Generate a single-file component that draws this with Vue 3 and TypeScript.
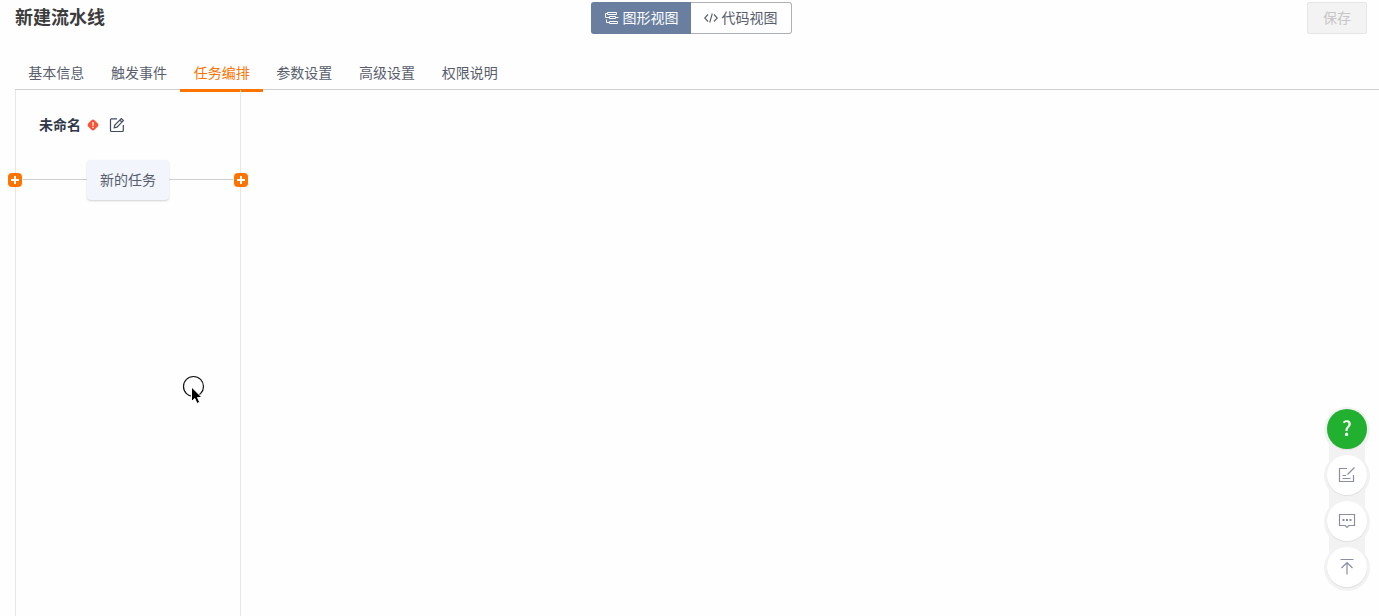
<script setup lang="ts">
import { ref } from 'vue'

const tabs: string[] = ['基本信息', '触发事件', '任务编排', '参数设置', '高级设置', '权限说明']
const activeTab = ref('任务编排')
const view = ref<'graph' | 'code'>('graph')
</script>

<template>
  <div class="page">
    <header class="header">
      <h1 class="title">新建流水线</h1>
      <div class="switch">
        <button type="button" class="switch-item" :class="{ on: view === 'graph' }" @click="view = 'graph'">
          <svg width="14" height="14" viewBox="0 0 14 14" fill="none" stroke="currentColor">
            <path d="M2.500 1.500H11.500V3.500H2.500Z" />
            <path d="M2.500 2.500H.500V6.500H4.500M4.500 5.500H10.500V7.500H4.500ZM10.500 6.500H13.500" />
            <path d="M4.500 10.500H12.500V12.500H4.500ZM4.500 11.500H1.500V8.500" />
          </svg>
          <span>图形视图</span>
        </button>
        <button type="button" class="switch-item" :class="{ on: view === 'code' }" @click="view = 'code'">
          <svg width="14" height="14" viewBox="0 0 14 14" fill="none" stroke="currentColor" stroke-width="1.100">
            <path d="M4 3.500.700 7 4 10.500M10 3.500 13.300 7 10 10.500M8.300 2.500 5.700 11.500" />
          </svg>
          <span>代码视图</span>
        </button>
      </div>
      <button type="button" class="save" disabled>保存</button>
    </header>

    <nav class="tabs">
      <div class="tab-list">
        <button
          v-for="tab in tabs"
          :key="tab"
          type="button"
          class="tab"
          :class="{ active: tab === activeTab }"
          @click="activeTab = tab"
        >{{ tab }}</button>
      </div>
    </nav>

    <main class="canvas">
      <section class="stage">
        <div class="stage-head">
          <h2 class="stage-name">未命名</h2>
          <svg class="warn" width="12" height="12" viewBox="0 0 12 12">
            <path d="M4.500 1.200Q6 0 7.500 1.200L10.800 4.500Q12 6 10.800 7.500L7.500 10.800Q6 12 4.500 10.800L1.200 7.500Q0 6 1.200 4.500Z" fill="#fa5234" />
            <path d="M6 3v3.700M6 7.800v1.300" stroke="#fff" stroke-width="1.300" />
          </svg>
          <button type="button" class="edit" aria-label="编辑">
            <svg width="16" height="16" viewBox="0 0 16 16" fill="none" stroke="#414b5e" stroke-width="1.200">
              <path d="M8 1.800H2.500Q1.500 1.800 1.500 2.800V13.500Q1.500 14.500 2.500 14.500H13.300Q14.300 14.500 14.300 13.500V8" />
              <path d="M5.200 10.800 5.800 8 12.300 1.500 14.400 3.600 8 10.200ZM10.800 3 12.900 5.100" />
            </svg>
          </button>
        </div>
        <div class="flow">
          <button type="button" class="add" aria-label="添加前置阶段">
            <svg width="14" height="14" viewBox="0 0 14 14"><path d="M7 3v8M3 7h8" stroke="#fff" stroke-width="2" /></svg>
          </button>
          <span class="wire"></span>
          <button type="button" class="task">新的任务</button>
          <span class="wire"></span>
          <button type="button" class="add" aria-label="添加后置阶段">
            <svg width="14" height="14" viewBox="0 0 14 14"><path d="M7 3v8M3 7h8" stroke="#fff" stroke-width="2" /></svg>
          </button>
        </div>
      </section>
    </main>

    <svg class="pointer" width="24" height="30" viewBox="0 0 24 30">
      <circle cx="11.500" cy="11.500" r="10" fill="none" stroke="#111" stroke-width="1.200" />
      <path d="M9.500 12V26.500L12.800 23.500 15 28.500 17.700 27.300 15.500 22.500H20Z" fill="#000" stroke="#fff" stroke-width="1" />
    </svg>

    <aside class="tools">
      <button type="button" class="tool help" aria-label="帮助">?</button>
      <button type="button" class="tool" aria-label="反馈">
        <svg width="18" height="18" viewBox="0 0 18 18" fill="none" stroke="#8a8e9f" stroke-width="1.200">
          <path d="M9 2.500H1.500V15.500H15.500V9M9.500 8.500 16.500 1.500M4.500 9.500H8M4.500 12.500H12.500" />
        </svg>
      </button>
      <button type="button" class="tool" aria-label="留言">
        <svg width="18" height="18" viewBox="0 0 18 18" fill="none" stroke="#8a8e9f" stroke-width="1.200">
          <path d="M1.500 2.500H16.500V13.500H10.800L9 15.300 7.200 13.500H1.500Z" />
          <path d="M4.500 8h2M8 8h2M11.500 8h2" stroke-width="1.800" />
        </svg>
      </button>
      <button type="button" class="tool" aria-label="返回顶部">
        <svg width="18" height="18" viewBox="0 0 18 18" fill="none" stroke="#8a8e9f" stroke-width="1.200">
          <path d="M2.500 1.500H15.500M9 16.500V4.500M3.500 10 9 4.500 14.500 10" />
        </svg>
      </button>
    </aside>
  </div>
</template>

<style>
body {
  background: #fefefe;
}
</style>

<style scoped>
.page {
  display: flex;
  flex-direction: column;
  min-height: 100vh;
  font-family: "Noto Sans CJK SC", sans-serif;
  font-size: 14px;
  line-height: 20px;
  color: #575d6c;
}

button {
  margin: 0;
  padding: 0;
  border: 0;
  background: none;
  font: inherit;
  color: inherit;
  cursor: pointer;
}

svg {
  display: block;
  flex: none;
}

.header {
  display: grid;
  grid-template-columns: 1fr auto 1fr;
  align-items: start;
  padding: 2px 12px 0 15px;
}

.title {
  margin: 0;
  font-size: 18px;
  line-height: 28px;
  font-weight: 700;
  color: #3c3c3c;
}

.switch {
  display: flex;
}

.switch-item {
  display: flex;
  align-items: center;
  gap: 4px;
  height: 32px;
  padding: 0 13px;
  border: 1px solid #adb0b8;
  border-left: 0;
  border-radius: 0 3px 3px 0;
}

.switch-item span {
  padding-bottom: 2px;
}

.switch-item:first-child {
  padding-right: 12px;
  border-left: 1px solid #adb0b8;
  border-right: 0;
  border-radius: 3px 0 0 3px;
}

.switch-item.on {
  border-color: #6a7f9f;
  background: #6a7f9f;
  color: #fff;
}

.save {
  justify-self: end;
  width: 60px;
  height: 32px;
  padding-bottom: 2px;
  border: 1px solid #e6e6e6;
  border-radius: 2px;
  background: #f3f3f3;
  color: #c6c6c6;
}

.tabs {
  margin: 24px 0 0 15px;
  border-bottom: 1px solid #cfcfd1;
}

.tab-list {
  display: flex;
  max-width: 496px;
}

.tab {
  position: relative;
  flex: 1;
  height: 31px;
  padding-bottom: 4px;
}

.tab.active {
  color: #ff7300;
}

.tab.active::after {
  content: "";
  position: absolute;
  left: 0;
  right: 0;
  bottom: -3px;
  height: 3px;
  background: #ff7300;
}

.canvas {
  display: flex;
  flex: 1;
  padding-left: 15px;
}

.stage {
  position: relative;
  box-sizing: border-box;
  width: 226px;
  border: 1px solid #e6e7ea;
  border-width: 0 1px;
}

.stage-head {
  display: flex;
  align-items: center;
  height: 70px;
  padding-left: 23px;
}

.stage-name {
  margin: 0;
  padding-bottom: 2px;
  font-size: 14px;
  font-weight: 700;
  color: #30384a;
}

.warn {
  margin: 0 10px 0 6px;
}

.flow {
  display: flex;
  align-items: center;
  margin: 0 -8px;
}

.add {
  width: 14px;
  height: 14px;
  border-radius: 4px;
  background: #ff7300;
}

.wire {
  flex: 1;
  height: 1px;
  margin: 0 1px 1px;
  background: #cdced2;
}

.task {
  margin: 0 -1px;
  padding: 9px 13px 11px;
  border-radius: 4px;
  background: #f2f5fc;
  box-shadow: 0 1px 2px rgba(0, 0, 0, 0.18);
}

.pointer {
  position: fixed;
  left: 182px;
  top: 375px;
  pointer-events: none;
}

.tools {
  position: fixed;
  right: 12px;
  bottom: 29px;
  display: flex;
  flex-direction: column;
  gap: 6px;
}

.tools::before {
  content: "";
  position: absolute;
  left: 2px;
  right: 2px;
  top: 20px;
  bottom: 20px;
  background: #f2f2f2;
}

.tool {
  position: relative;
  display: flex;
  align-items: center;
  justify-content: center;
  width: 40px;
  height: 40px;
  border-radius: 50%;
  background: #fff;
  box-shadow: 0 1px 1px rgba(0, 0, 0, 0.08), 0 1px 0 3px #f2f2f2;
}

.help {
  padding-bottom: 2px;
  background: #22b030;
  color: #fff;
  font-size: 20px;
  font-weight: 500;
}
</style>
